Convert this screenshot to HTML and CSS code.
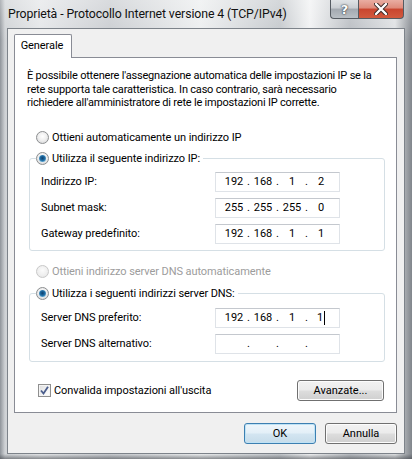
FILE: index.html
```html
<!DOCTYPE html>
<html lang="it">
<head>
    <meta charset="UTF-8">
    <title>Proprietà - Protocollo Internet versione 4 (TCP/IPv4)</title>
    <link rel="stylesheet" href="styles.css">
</head>
<body>
    <div class="window">
        <div class="titlebar">
            <span class="title">Proprietà - Protocollo Internet versione 4 (TCP/IPv4)</span>
            <div class="caption-buttons">
                <div class="cap-btn help">?</div>
                <div class="cap-btn close">
                    <svg width="14" height="12" viewBox="0 0 14 12">
                        <path d="M2 1 L12 11 M12 1 L2 11" stroke="#3b2a28" stroke-width="4.2" stroke-linecap="round"/>
                        <path d="M2 1 L12 11 M12 1 L2 11" stroke="#fff" stroke-width="2.4" stroke-linecap="round"/>
                    </svg>
                </div>
            </div>
        </div>
        <div class="client">
            <div class="tabs">
                <div class="tab active">Generale</div>
            </div>
            <div class="panel">
                <p class="intro">È possibile ottenere l'assegnazione automatica delle impostazioni IP se la<br>rete supporta tale caratteristica. In caso contrario, sarà necessario<br>richiedere all'amministratore di rete le impostazioni IP corrette.</p>

                <div class="option option-ip-auto"><span class="radio"></span>Ottieni automaticamente un indirizzo IP</div>

                <div class="group group-ip">
                    <div class="group-title"><span class="radio checked"></span>Utilizza il seguente indirizzo IP:</div>
                    <div class="field-row">
                        <span class="field-label">Indirizzo IP:</span>
                        <div class="ip-box"><span class="octet">192</span><span class="dot">.</span><span class="octet">168</span><span class="dot">.</span><span class="octet">1</span><span class="dot">.</span><span class="octet">2</span></div>
                    </div>
                    <div class="field-row">
                        <span class="field-label">Subnet mask:</span>
                        <div class="ip-box"><span class="octet">255</span><span class="dot">.</span><span class="octet">255</span><span class="dot">.</span><span class="octet">255</span><span class="dot">.</span><span class="octet">0</span></div>
                    </div>
                    <div class="field-row">
                        <span class="field-label">Gateway predefinito:</span>
                        <div class="ip-box"><span class="octet">192</span><span class="dot">.</span><span class="octet">168</span><span class="dot">.</span><span class="octet">1</span><span class="dot">.</span><span class="octet">1</span></div>
                    </div>
                </div>

                <div class="option option-dns-auto disabled"><span class="radio"></span>Ottieni indirizzo server DNS automaticamente</div>

                <div class="group group-dns">
                    <div class="group-title"><span class="radio checked"></span>Utilizza i seguenti indirizzi server DNS:</div>
                    <div class="field-row">
                        <span class="field-label">Server DNS preferito:</span>
                        <div class="ip-box"><span class="octet">192</span><span class="dot">.</span><span class="octet">168</span><span class="dot">.</span><span class="octet">1</span><span class="dot">.</span><span class="octet">1<span class="caret"></span></span></div>
                    </div>
                    <div class="field-row">
                        <span class="field-label">Server DNS alternativo:</span>
                        <div class="ip-box"><span class="octet"></span><span class="dot">.</span><span class="octet"></span><span class="dot">.</span><span class="octet"></span><span class="dot">.</span><span class="octet"></span></div>
                    </div>
                </div>

                <div class="panel-footer">
                    <div class="option">
                        <span class="checkbox">
                            <svg width="9" height="9" viewBox="0 0 9 9">
                                <path d="M1 4.5 L3.5 7.5 L8 0.8" fill="none" stroke="#4a5d8c" stroke-width="1.8"/>
                            </svg>
                        </span>Convalida impostazioni all'uscita
                    </div>
                    <button class="btn btn-advanced">Avanzate...</button>
                </div>
            </div>
            <div class="dialog-buttons">
                <button class="btn default">OK</button>
                <button class="btn">Annulla</button>
            </div>
        </div>
    </div>
</body>
</html>
```

FILE: styles.css
```css
* {
    box-sizing: border-box;
}
body {
    margin: 0;
    padding: 0;
    font-family: Roboto, "Liberation Sans", Arial, sans-serif;
    font-size: 11px;
    letter-spacing: -0.08px;
    color: #000;
    background: #fff;
}
.window {
    width: 412px;
    height: 459px;
    display: flex;
    flex-direction: column;
    background:
        linear-gradient(180deg, rgba(255,255,255,0.3), rgba(255,255,255,0) 40px),
        linear-gradient(0deg, rgba(60,64,70,0.55) 0px, rgba(60,64,70,0) 5px),
        linear-gradient(90deg, #8f949a 0px, #cfd2d5 5px, #e4e6e8 40px, #c9ccd0 110px, #eceeef 200px, #c3c7cb 280px, #f1f2f3 310px, #b8bcc1 350px, #dfe1e3 395px, #80858b 412px);
    overflow: hidden;
}
.titlebar {
    height: 28px;
    display: flex;
    justify-content: space-between;
    align-items: flex-start;
    padding-left: 8px;
    padding-right: 8px;
}
.title {
    font-size: 12.3px;
    line-height: 28px;
    color: #111;
    letter-spacing: -0.1px;
}
.caption-buttons {
    display: flex;
}
.cap-btn {
    height: 19px;
    border: 1px solid #555b62;
    border-top: none;
    display: flex;
    align-items: center;
    justify-content: center;
}
.help {
    width: 28px;
    border-right: none;
    border-radius: 0 0 0 4px;
    background: linear-gradient(180deg, #e0e3e6 0%, #c9cdd2 45%, #a3a9b0 50%, #b9bfc5 100%);
    color: #fff;
    font-family: "DejaVu Sans", sans-serif;
    font-weight: bold;
    font-size: 13px;
    text-shadow: 0 0 2px #2a3038, 0 0 1px #2a3038;
}
.close {
    width: 46px;
    border-radius: 0 0 4px 0;
    background: linear-gradient(180deg, #e9ada2 0%, #de8a7a 45%, #c9452f 50%, #d25a3e 100%);
}
.client {
    flex: 1;
    margin: 0 7px 6px 7px;
    border: 1px solid #7d838a;
    background: #f0f0f0;
    padding: 5px 7px 9px 6px;
    display: flex;
    flex-direction: column;
}
.tabs {
    display: flex;
    position: relative;
    z-index: 1;
}
.tab {
    height: 24px;
    width: 58px;
    margin-bottom: -1px;
    border: 1px solid #898c95;
    border-bottom: none;
    border-radius: 2px 2px 0 0;
    background: #fff;
    text-align: center;
    line-height: 22px;
    padding-right: 2px;
}
.panel {
    height: 356px;
    border: 1px solid #898c95;
    background: #fff;
    padding: 11px 11px 0 12px;
}
.intro {
    margin: 0;
    line-height: 13.5px;
    white-space: nowrap;
    letter-spacing: -0.2px;
}
.option {
    display: flex;
    align-items: center;
    height: 15px;
    line-height: 15px;
}
.option-ip-auto {
    margin-top: 20px;
    padding-left: 9px;
}
.option-dns-auto {
    margin-top: 13px;
    padding-left: 9px;
}
.option.disabled {
    color: #9c9c9c;
}
.radio {
    width: 13px;
    height: 13px;
    border-radius: 50%;
    border: 1px solid #8c8e90;
    background: radial-gradient(circle at 50% 40%, #ffffff 0%, #f0f0f0 45%, #cfd0d2 100%);
    margin-right: 3px;
    display: flex;
    align-items: center;
    justify-content: center;
    flex: none;
}
.radio.checked::after {
    content: "";
    width: 7px;
    height: 7px;
    border-radius: 50%;
    background: radial-gradient(circle at 50% 45%, #0d3f6d 0%, #1f6ca3 45%, #7fc1e5 85%, #b7dcf0 100%);
}
.disabled .radio {
    border-color: #c8c8c8;
    background: radial-gradient(circle at 50% 40%, #fbfbfb 0%, #eeeeee 60%, #e0e0e0 100%);
}
.group {
    margin-left: 2px;
    border: 1px solid #d5dfe5;
    border-radius: 3px;
    padding: 0 5px 0 11px;
}
.group-ip {
    margin-top: 13px;
    height: 93px;
}
.group-dns {
    margin-top: 14px;
    height: 69px;
}
.group-title {
    display: flex;
    width: max-content;
    align-items: center;
    height: 15px;
    line-height: 15px;
    margin-top: -8px;
    margin-left: -5px;
    padding: 0 3px 0 0;
    background: #fff;
}
.field-row {
    display: flex;
    align-items: center;
    justify-content: space-between;
    height: 20px;
    margin-top: 6px;
}
.group-dns .group-title + .field-row {
    margin-top: 7px;
}
.ip-box {
    width: 125px;
    height: 20px;
    margin-right: 39px;
    border: 1px solid #dfe3e8;
    border-top-color: #c4c8ce;
    background: #fff;
    display: flex;
    align-items: center;
    padding-left: 7px;
    line-height: 18px;
}
.octet {
    width: 22px;
    display: inline-flex;
    justify-content: center;
    align-items: center;
}
.dot {
    width: 7px;
    text-align: center;
}
.caret {
    display: inline-block;
    width: 1px;
    height: 14px;
    background: #000;
    margin-left: 1px;
}
.panel-footer {
    display: flex;
    justify-content: space-between;
    align-items: center;
    margin-top: 18px;
    padding-left: 11px;
    padding-right: 1px;
}
.checkbox {
    width: 13px;
    height: 13px;
    border: 1px solid #8f8f8f;
    background: linear-gradient(135deg, #dcdcdc 0%, #f4f4f4 60%, #ffffff 100%);
    box-shadow: inset 0 0 0 1px #f4f4f4;
    margin-right: 3px;
    display: flex;
    align-items: center;
    justify-content: center;
}
.btn {
    font-family: inherit;
    font-size: inherit;
    color: #000;
    height: 21px;
    border: 1px solid #707070;
    border-radius: 3px;
    background: linear-gradient(180deg, #f2f2f2 0%, #ebebeb 48%, #dddddd 52%, #cfcfcf 100%);
    box-shadow: inset 0 0 0 1px #fcfcfc;
    padding: 0;
}
.btn-advanced {
    width: 87px;
}
.dialog-buttons {
    display: flex;
    justify-content: flex-end;
    gap: 9px;
    margin-top: 10px;
}
.dialog-buttons .btn {
    width: 72px;
}
.btn.default {
    border-color: #3c7fb1;
    background: linear-gradient(180deg, #eef6fb 0%, #e3eff7 48%, #d3e5f1 52%, #c6dcea 100%);
    box-shadow: inset 0 0 0 1px #bfe2f5;
}
```
